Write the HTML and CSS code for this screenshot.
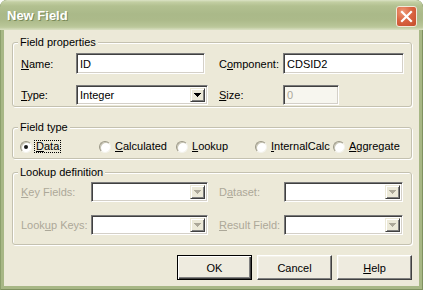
FILE: index.html
```html
<!DOCTYPE html>
<html>
<head>
<meta charset="utf-8">
<title>New Field</title>
<link rel="stylesheet" href="styles.css">
</head>
<body>
<div class="window">
  <div class="titlebar">
    <span class="title">New Field</span>
    <div class="close">
      <svg width="21" height="21" viewBox="0 0 21 21">
        <path d="M6 6L15 15M15 6L6 15" stroke="#fff" stroke-width="2.2" stroke-linecap="square"/>
      </svg>
    </div>
  </div>
  <div class="client">
    <fieldset class="group props">
      <legend>Field properties</legend>
      <div class="props-grid">
        <span class="lbl"><u>N</u>ame:</span>
        <div class="edit w-name">ID</div>
        <span class="lbl">C<u>o</u>mponent:</span>
        <div class="edit w-comp">CDSID2</div>
        <span class="lbl"><u>T</u>ype:</span>
        <div class="combo w-type">
          <span class="val">Integer</span>
          <span class="drop"><svg width="7" height="4" viewBox="0 0 7 4"><path d="M0 0h7v1H0zM1 1h5v1H1zM2 2h3v1H2zM3 3h1v1H3z" fill="#000"/></svg></span>
        </div>
        <span class="lbl"><u>S</u>ize:</span>
        <div class="edit w-size disabled">0</div>
      </div>
    </fieldset>

    <fieldset class="group ftype">
      <legend>Field type</legend>
      <div class="radio-row">
        <div class="opt"><span class="radio checked"></span><span class="otext focus"><u>D</u>ata</span></div>
        <div class="opt"><span class="radio"></span><span class="otext"><u>C</u>alculated</span></div>
        <div class="opt"><span class="radio"></span><span class="otext"><u>L</u>ookup</span></div>
        <div class="opt"><span class="radio"></span><span class="otext"><u>I</u>nternalCalc</span></div>
        <div class="opt"><span class="radio"></span><span class="otext"><u>A</u>ggregate</span></div>
      </div>
    </fieldset>

    <fieldset class="group lookup">
      <legend>Lookup definition</legend>
      <div class="lookup-grid">
        <span class="lbl dis"><u>K</u>ey Fields:</span>
        <div class="combo w-lk">
          <span class="val"></span>
          <span class="drop"><svg width="7" height="4" viewBox="0 0 7 4"><path d="M0 0h7v1H0zM1 1h5v1H1zM2 2h3v1H2zM3 3h1v1H3z" fill="#ACA899"/></svg></span>
        </div>
        <span class="lbl dis">D<u>a</u>taset:</span>
        <div class="combo w-lr">
          <span class="val"></span>
          <span class="drop"><svg width="7" height="4" viewBox="0 0 7 4"><path d="M0 0h7v1H0zM1 1h5v1H1zM2 2h3v1H2zM3 3h1v1H3z" fill="#ACA899"/></svg></span>
        </div>
        <span class="lbl dis">Look<u>u</u>p Keys:</span>
        <div class="combo w-lk">
          <span class="val"></span>
          <span class="drop"><svg width="7" height="4" viewBox="0 0 7 4"><path d="M0 0h7v1H0zM1 1h5v1H1zM2 2h3v1H2zM3 3h1v1H3z" fill="#ACA899"/></svg></span>
        </div>
        <span class="lbl dis"><u>R</u>esult Field:</span>
        <div class="combo w-lr">
          <span class="val"></span>
          <span class="drop"><svg width="7" height="4" viewBox="0 0 7 4"><path d="M0 0h7v1H0zM1 1h5v1H1zM2 2h3v1H2zM3 3h1v1H3z" fill="#ACA899"/></svg></span>
        </div>
      </div>
    </fieldset>

    <div class="buttons">
      <button class="btn default">OK</button>
      <button class="btn">Cancel</button>
      <button class="btn"><u>H</u>elp</button>
    </div>
  </div>
</div>
</body>
</html>
```

FILE: styles.css
```css
* { box-sizing: border-box; }
html, body { margin: 0; padding: 0; }
body {
  width: 423px;
  height: 290px;
  background: #ffffff;
  font-family: "Liberation Sans", Arial, sans-serif;
  font-size: 11px;
  color: #000;
  overflow: hidden;
}
u { text-decoration: underline; text-underline-offset: 1px; }

.window {
  width: 423px;
  height: 290px;
  display: flex;
  flex-direction: column;
  padding: 0 4px 4px 4px;
  background: #A7B785;
  border-radius: 7px 7px 0 0;
  overflow: hidden;
  box-shadow: inset 1px 0 #8C9F6C, inset -1px 0 #7F9160, inset 0 -1px #7F9160;
}

.titlebar {
  height: 30px;
  margin: 0 -4px;
  display: flex;
  align-items: flex-start;
  padding: 0 6px 0 7px;
  background: linear-gradient(#DCE3C6 0, #C3CFA3 2px, #B2C090 6px, #AAB989 14px, #ACBA8A 20px, #B8C597 26px, #C2CDA3 28px, #D5DCBC 29px, #D5DCBC 30px);
  border-radius: 7px 7px 0 0;
}
.title {
  margin-top: 8px;
  font-family: "Liberation Sans", Arial, sans-serif;
  font-weight: bold;
  font-size: 13px;
  line-height: 15px;
  color: #fff;
  text-shadow: 1px 1px 0 #7A8A58;
}
.close {
  margin-left: auto;
  margin-top: 6px;
  width: 21px;
  height: 21px;
  border: 1px solid #F2E9DA;
  border-radius: 3px;
  background: radial-gradient(circle at 30% 25%, #EE9A78 0, #DA6642 45%, #C44B2B 100%);
  display: flex;
}
.close svg { margin: -1px; }

.client {
  flex: 1;
  background: #ECE9D8;
  padding: 6px 7px 0 8px;
  display: flex;
  flex-direction: column;
}

.group {
  margin: 0;
  padding: 0;
  min-width: 0;
  border: 1px solid #C4C1B0;
  border-radius: 3px;
  box-shadow: 1px 1px 0 #fff, inset 1px 1px 0 #fff;
}
.group legend {
  margin-left: 5px;
  padding: 0 2px;
  line-height: 12px;
  font-size: 11px;
  background: #ECE9D8;
}

.lbl { white-space: nowrap; }
.lbl.dis { color: #ACA899; }

.props-grid {
  display: grid;
  grid-template-columns: 55px 143px 64px 1fr;
  grid-template-rows: 21px 20px;
  row-gap: 11px;
  align-items: center;
  padding: 5px 0 1px 8px;
}

.edit, .combo {
  height: 100%;
  background: #fff;
  border: 1px solid;
  border-color: #7A7A7A #FFFFFF #FFFFFF #7A7A7A;
  box-shadow: inset 1px 1px 0 #404040, inset -1px -1px 0 #D4D0C8;
  display: flex;
  align-items: center;
  white-space: nowrap;
}
.edit { padding-left: 3px; }
.edit.disabled { color: #ACA899; background: #F7F6EF; }
.w-name { width: 129px; }
.w-comp { width: 121px; }
.w-size { width: 56px; }
.w-type { width: 132px; }

.combo { padding: 2px; }
.combo .val { flex: 1; padding-left: 1px; }
.drop {
  width: 15px;
  height: 100%;
  background: #ECE9D8;
  border: 1px solid;
  border-color: #ECE9D8 #404040 #404040 #ECE9D8;
  box-shadow: inset 1px 1px 0 #fff, inset -1px -1px 0 #808080;
  display: flex;
  align-items: center;
  justify-content: center;
}

.radio-row {
  display: grid;
  grid-template-columns: 79px 77px 79px 78px 1fr;
  height: 13px;
  margin: 7px 0 5px 7px;
}
.opt {
  display: flex;
  align-items: center;
  gap: 2px;
  white-space: nowrap;
}
.radio {
  position: relative;
  width: 12px;
  height: 12px;
  border-radius: 50%;
  background: #fff;
  border: 1px solid;
  border-color: #9A9785 #F4F3EC #F4F3EC #9A9785;
  box-shadow: inset 1px 1px 0 #C9C6B6;
}
.radio.checked::after {
  content: "";
  position: absolute;
  left: 3px;
  top: 3px;
  width: 4px;
  height: 4px;
  border-radius: 50%;
  background: #1A1A1A;
}
.otext {
  border: 1px solid transparent;
  padding: 0 1px;
  line-height: 11px;
}
.otext.focus { border: 1px dotted #000; }

.lookup-grid {
  display: grid;
  grid-template-columns: 70px 128px 65px 1fr;
  grid-template-rows: 20px 20px;
  row-gap: 13px;
  align-items: center;
  padding: 4px 0 9px 8px;
}
.w-lk { width: 117px; }
.w-lr { width: 119px; }

.props { margin-bottom: 14px; }
.ftype { margin-bottom: 7px; }

.buttons {
  margin-top: 10px;
  display: flex;
  justify-content: flex-end;
  gap: 5px;
}
.btn {
  width: 75px;
  height: 25px;
  font-family: "Liberation Sans", Arial, sans-serif;
  font-size: 11px;
  color: #000;
  background: #EEEBDF;
  border: 1px solid;
  border-color: #FFFFFF #404040 #404040 #FFFFFF;
  box-shadow: inset -1px -1px 0 #808080, inset 1px 1px 0 #F4F2E9;
  padding: 0;
}
.btn.default {
  border: 1px solid #000;
  box-shadow: inset 1px 1px 0 #fff, inset -1px -1px 0 #404040, inset -2px -2px 0 #808080;
}
```
